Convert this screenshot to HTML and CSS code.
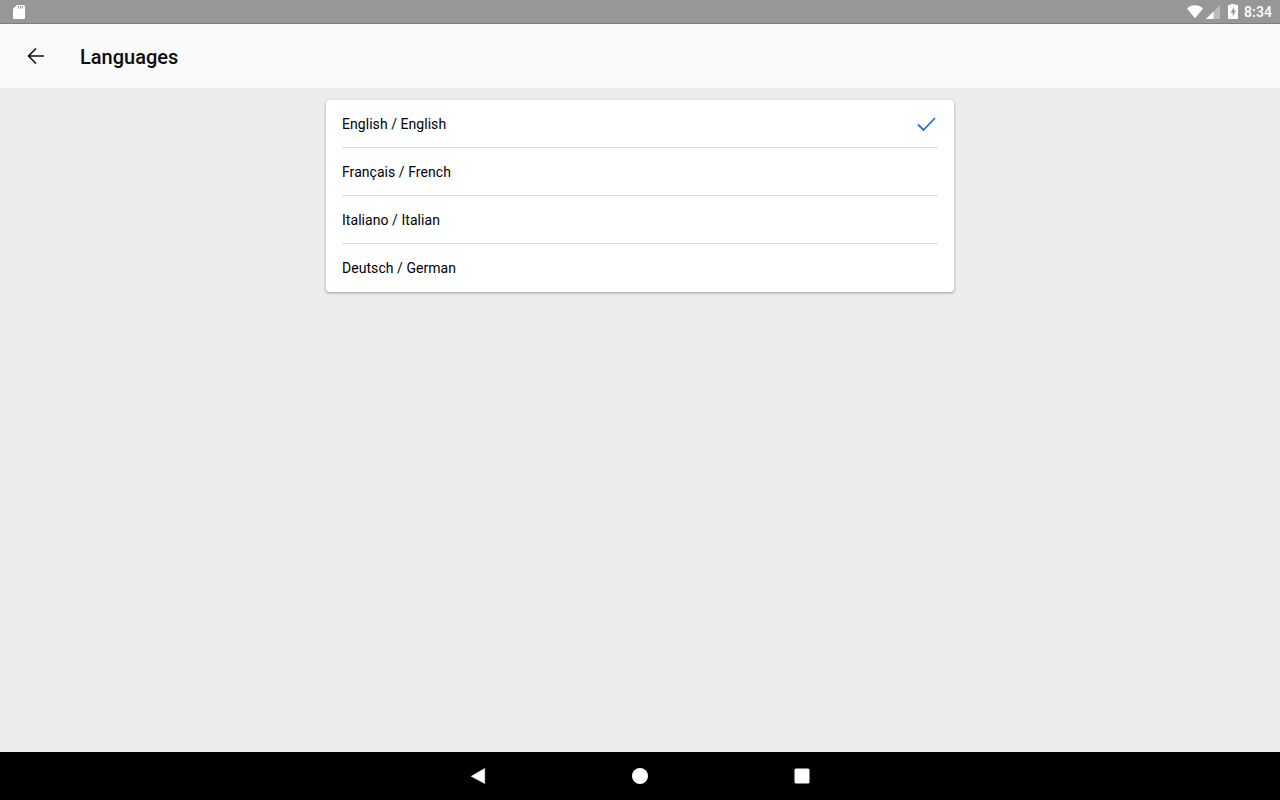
FILE: index.html
```html
<!DOCTYPE html>
<html lang="en">
<head>
<meta charset="utf-8">
<title>Languages</title>
<link rel="stylesheet" href="styles.css">
</head>
<body>
<div class="screen">
  <header class="status">
    <svg class="sd" width="14" height="16" viewBox="0 0 14 16"><path fill="#fff" d="M5 1h6.500a1.500 1.500 0 0 1 1.500 1.500v11a1.500 1.500 0 0 1-1.500 1.500h-9A1.500 1.500 0 0 1 1 13.500V5z"/><path stroke="#979797" stroke-width="1" d="M6.500 2v2.500M8.500 2v2.500M10.500 2v2.500"/></svg>
    <div class="status-right">
      <svg class="wifi" width="18" height="14" viewBox="0 0 18 14"><path fill="#fff" d="M1 3.500C3.200 1.400 5.900 0.300 9 0.300s5.800 1.100 8 3.200L9 13.300z"/></svg>
      <svg class="signal" width="15" height="14" viewBox="0 0 15 14"><path fill="#fff" fill-opacity=".35" d="M15 0v14H1z"/><path fill="#fff" d="M8.500 6.500V14H1z"/></svg>
      <svg class="battery" width="10" height="15" viewBox="0 0 10 15"><path fill="#fff" d="M2.500 1V0h5v1H10v14H0V1z"/><path fill="#979797" d="M6 3 2.500 8.500h2.200V12.500l3.300-6H5.800z"/></svg>
      <span class="time">8:34</span>
    </div>
  </header>
  <div class="toolbar">
    <svg class="back" width="24" height="24" viewBox="0 0 24 24"><path fill="none" stroke="#111" stroke-width="1.600" d="M20 12H5M12 4.500 4.500 12l7.500 7.500"/></svg>
    <h1 class="title">Languages</h1>
  </div>
  <main class="content">
    <ul class="card">
      <li class="row">
        <span>English / English</span>
        <svg class="check" width="24" height="24" viewBox="0 0 24 24"><path fill="none" stroke="#1a6cf0" stroke-width="1.800" d="M4 12.500 9.500 18 21 6"/></svg>
      </li>
      <li class="row"><span>Français / French</span></li>
      <li class="row"><span>Italiano / Italian</span></li>
      <li class="row"><span>Deutsch / German</span></li>
    </ul>
  </main>
  <nav class="navbar">
    <svg width="16" height="16" viewBox="0 0 16 16"><path fill="#fff" stroke="#fff" stroke-width=".6" stroke-linejoin="round" d="M14.700 .5v15L1.300 8.300z"/></svg>
    <svg width="16" height="16" viewBox="0 0 16 16"><circle cx="8" cy="8" r="8" fill="#fff"/></svg>
    <svg width="16" height="16" viewBox="0 0 16 16"><rect x=".5" y=".5" width="15" height="15" rx="1.500" fill="#fff"/></svg>
  </nav>
</div>
</body>
</html>
```
FILE: styles.css
```css
* { box-sizing: border-box; }
html, body { margin: 0; padding: 0; }
body { font-family: Roboto, "Liberation Sans", sans-serif; }
.screen { width: 1280px; height: 800px; display: flex; flex-direction: column; background: #ececec; overflow: hidden; }
.status { height: 24px; flex: none; background: #979797; border-bottom: 1px solid #7d7d7d; display: flex; align-items: center; justify-content: space-between; padding: 0 8px 0 12px; }
.sd { display: block; margin-top: 1px; }
.status-right { display: flex; align-items: center; }
.wifi { margin-top: 1px; }
.signal { margin-left: 1px; margin-top: 1px; }
.battery { margin-left: 8px; }
.time { margin-left: 6px; color: #fff; font-size: 14px; font-weight: 500; letter-spacing: .1px; }
.toolbar { height: 64px; flex: none; background: #fafafa; display: flex; align-items: center; padding-left: 24px; }
.back { display: block; margin-top: -1px; }
.title { margin: 0 0 -2px 32px; font-size: 20px; font-weight: 500; color: #0c0c0c; }
.content { flex: 1; display: flex; justify-content: center; align-items: flex-start; padding-top: 12px; }
.card { width: 628px; margin: 0; padding: 0 16px; list-style: none; background: #fff; border-radius: 4px; box-shadow: 0 1px 3px rgba(0,0,0,.35); }
.row { height: 48px; padding-top: 1px; display: flex; align-items: center; justify-content: space-between; font-size: 14px; color: #000; letter-spacing: .05px; border-bottom: 1px solid #dcdcdc; }
.row:last-child { padding-top: 0; border-bottom: 0; }
.check { display: block; }
.navbar { height: 48px; flex: none; background: #000; display: flex; justify-content: center; align-items: center; gap: 146px; }
```
